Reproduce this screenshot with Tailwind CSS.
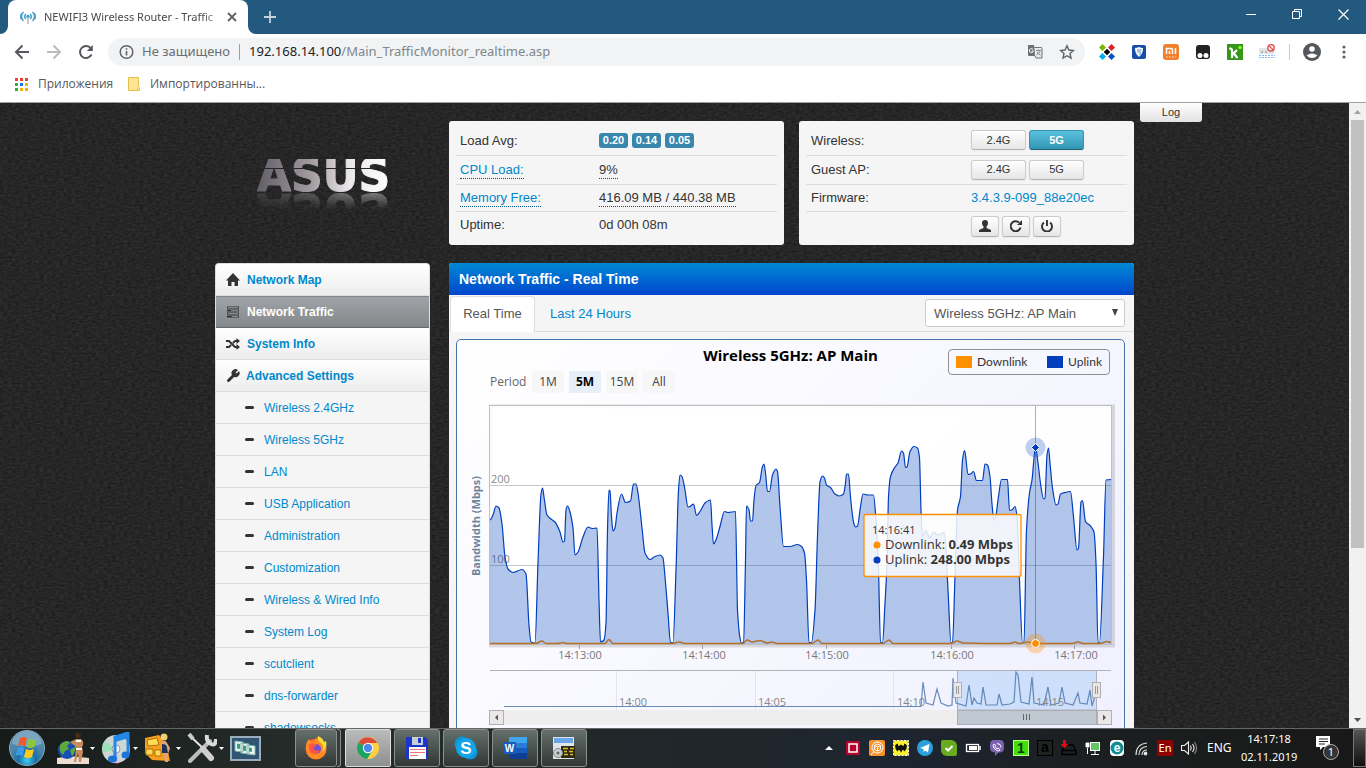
<!DOCTYPE html>
<html lang="ru">
<head>
  <meta charset="UTF-8" />
  <meta name="viewport" content="width=device-width, initial-scale=1" />
  <title>NEWIFI3 Wireless Router - Traffic Monitor</title>
  <script src="https://cdn.jsdelivr.net/npm/@tailwindcss/browser@4"></script>
</head>
<body class="h-screen overflow-hidden flex flex-col bg-[#262626] text-[#333] text-[13px] font-['Liberation_Sans',Arial,sans-serif]">

  <!-- tab strip -->
  <div class="h-[34px] shrink-0 bg-[#23587f] flex items-start pl-2 font-['Noto_Sans','Open_Sans',sans-serif]">
    <div class="relative w-60 h-[34px] bg-white rounded-t-lg flex items-center pl-3 pr-2 text-[#45494d]">
      <svg class="absolute -left-2 bottom-0 w-2 h-2" viewBox="0 0 8 8"><path d="M8 0v8H0a8 8 0 0 0 8-8z" fill="#fff"/></svg>
      <svg class="absolute -right-2 bottom-0 w-2 h-2" viewBox="0 0 8 8"><path d="M0 0v8h8a8 8 0 0 1-8-8z" fill="#fff"/></svg>
      <svg class="w-4 h-4 shrink-0" viewBox="0 0 16 16" fill="none" stroke="#3d9ccc" stroke-width="1.500">
        <path d="M3.500 3a6 6 0 0 0 0 9M12.500 3a6 6 0 0 1 0 9M5.800 5a3.500 3.500 0 0 0 0 5M10.200 5a3.500 3.500 0 0 1 0 5M1.500 4.500a7 7 0 0 0 0 6M14.500 4.500a7 7 0 0 1 0 6"/>
        <circle cx="8" cy="7.500" r="1" fill="#3d9ccc"/><path d="M8 8v7" stroke="#b5b5b5"/>
      </svg>
      <span class="ml-2 flex-1 text-[11px] whitespace-nowrap [mask-image:linear-gradient(90deg,#000_88%,#0003)]">NEWIFI3 Wireless Router - Traffic</span>
      <button class="w-4 h-4" aria-label="Close tab"><svg class="w-4 h-4" viewBox="0 0 16 16"><path d="M4 4l8 8M12 4l-8 8" stroke="#5f6368" stroke-width="1.800"/></svg></button>
    </div>
    <button class="ml-4 h-[34px] w-3" aria-label="New tab"><svg class="w-3 h-3" viewBox="0 0 12 12"><path d="M6 0v12M0 6h12" stroke="#c5d3de" stroke-width="1.800"/></svg></button>
    <div class="ml-auto flex items-center h-[28px] text-white">
      <button class="w-[46px] flex justify-center" aria-label="Minimize"><svg class="w-[11px] h-[11px]" viewBox="0 0 11 11"><path d="M0 5.500h10" stroke="#fff"/></svg></button>
      <button class="w-[46px] flex justify-center" aria-label="Restore"><svg class="w-[11px] h-[11px]" viewBox="0 0 11 11"><path d="M.5 2.500h7v7h-7zM2.500 2.500v-2h7v7h-2" fill="none" stroke="#fff"/></svg></button>
      <button class="w-[46px] flex justify-center" aria-label="Close"><svg class="w-[11px] h-[11px]" viewBox="0 0 11 11"><path d="M.5.5l10 10M10.500.5l-10 10" stroke="#fff" stroke-width="1.200"/></svg></button>
    </div>
  </div>

  <!-- toolbar -->
  <div class="h-9 shrink-0 bg-white flex items-center pl-[14px] pr-[14px] font-['Noto_Sans','Open_Sans',sans-serif]">
    <div class="flex gap-4">
      <button aria-label="Back"><svg class="block w-4 h-4" viewBox="0 0 16 16"><path d="M15 8H2M8.500 1.500L2 8l6.500 6.500" fill="none" stroke="#55595e" stroke-width="2"/></svg></button>
      <button aria-label="Forward"><svg class="block w-4 h-4" viewBox="0 0 16 16"><path d="M1 8h13M7.500 1.500L14 8l-6.500 6.500" fill="none" stroke="#b9bbbd" stroke-width="2"/></svg></button>
      <button aria-label="Reload"><svg class="block w-4 h-4" viewBox="0 0 16 16"><path d="M13.500 10.500a6 6 0 1 1-.6-6" fill="none" stroke="#55595e" stroke-width="2"/><path d="M14.800 1v6h-6z" fill="#55595e"/></svg></button>
    </div>
    <div class="ml-[14px] h-7 flex-1 rounded-full bg-[#f1f3f4] flex items-center pl-[11px] pr-[10px] text-[13px]">
      <svg class="w-4 h-4" viewBox="0 0 16 16"><circle cx="7.500" cy="8" r="6.300" fill="none" stroke="#5f6368" stroke-width="1.500"/><path d="M7.500 7v4.500M7.500 4.200v1.600" stroke="#5f6368" stroke-width="1.600"/></svg>
      <span class="ml-[7px] text-[#6b6f74]">Не защищено</span>
      <span class="mx-[9px] w-px h-4 bg-[#9aa0a6]"></span>
      <div class="flex-1 whitespace-nowrap text-[#80868b]"><span class="text-[#202124]">192.168.14.100</span>/Main_TrafficMonitor_realtime.asp</div>
      <svg class="w-4 h-4" viewBox="0 0 16 16"><path d="M1 1h6l2 11H2a1 1 0 0 1-1-1z" fill="#6e7276"/><path d="M7.500 3.500H14a1 1 0 0 1 1 1V14H9l-1-2" fill="#e8eaeb" stroke="#6e7276"/><path d="M6 5.500a2 2 0 1 0 .3 1.500H4.500" fill="none" stroke="#fff"/><path d="M9 6.500h5M11.500 5.500v1M13 7q-1 3-3.500 4M10 8q1 2 3.500 3" fill="none" stroke="#6e7276" stroke-width=".8"/></svg>
      <svg class="w-4 h-4 ml-4" viewBox="0 0 16 16"><path d="M8 1.800l1.900 4.200 4.500.5-3.400 3 1 4.500L8 11.700 4 14l1-4.500-3.400-3 4.500-.5z" fill="none" stroke="#5f6368" stroke-width="1.400"/></svg>
    </div>
    <div class="ml-[14px] flex items-center gap-4">
      <svg class="w-4 h-4" viewBox="0 0 16 16"><path d="M3.500 0L7 3.500 3.500 7 0 3.500z" fill="#78b800"/><path d="M12.500 0L16 3.500 12.500 7 9 3.500z" fill="#e01f26"/><path d="M3.500 9L7 12.500 3.500 16 0 12.500z" fill="#00aeea"/><path d="M12.500 9l3.500 3.500-3.500 3.500L9 12.500z" fill="#0a4fc0"/><path d="M8 4.700L11.300 8 8 11.300 4.700 8z" fill="#000"/></svg>
      <svg class="w-4 h-4" viewBox="0 0 16 16"><rect x="1" y="1" width="14" height="14" rx="2" fill="#174ea6"/><path d="M8 3q2 1 4 1 0 6-4 9-4-3-4-9 2 0 4-1z" fill="#fff"/><path d="M6 6h4.500M6 8h4M8 10.500l2-1" stroke="#4d8fd0" fill="none"/></svg>
      <svg class="w-4 h-4" viewBox="0 0 16 16"><rect width="16" height="16" rx="3" fill="#f08030"/><path d="M3.500 10V4.500H8a1.500 1.500 0 0 1 1.500 1.500v4M6.500 7v3M12.500 4v6" fill="none" stroke="#fff" stroke-width="1.500"/><path d="M3 13h10" stroke="#ffd0a0" stroke-dasharray="2 1"/></svg>
      <svg class="w-4 h-4" viewBox="0 0 16 16"><path d="M4 1h8a3 3 0 0 1 3 3v8a3 3 0 0 1-3 3H4a3 3 0 0 1-3-3V4a3 3 0 0 1 3-3z" fill="#222"/><circle cx="5" cy="11.500" r="2.500" fill="#fff"/><circle cx="11" cy="11.500" r="2.500" fill="#fff"/></svg>
      <svg class="w-4 h-4" viewBox="0 0 16 16"><rect width="16" height="16" fill="#35961c"/><path d="M2.500 4l2.500 1.500V14M5 11l5-5M6.500 9l4 5" fill="none" stroke="#fff" stroke-width="2.200"/><circle cx="13" cy="3.500" r="1.800" fill="#7dff1e"/></svg>
      <svg class="w-4 h-4" viewBox="0 0 16 16"><rect y="4" width="15" height="6" fill="#e1e4e6"/><path d="M2 8h2M6 8h2" stroke="#888"/><path d="M0 11.500h16M0 13.500h16" stroke="#86b7f0" stroke-dasharray="2 1"/><circle cx="12" cy="3.800" r="3.200" fill="#fff" stroke="#e44b4b" stroke-width="1.400"/><path d="M10 1.800l4 4" stroke="#e44b4b" stroke-width="1.300"/></svg>
      <span class="w-px h-4 bg-[#c8cbce] -ml-[2px]"></span>
      <svg class="w-[18px] h-[18px] -ml-[3px]" viewBox="0 0 18 18"><circle cx="9" cy="9" r="9" fill="#54585d"/><circle cx="9" cy="6" r="2.800" fill="#fff"/><path d="M3.500 12.500q5.500-4 11 0-5.500 5-11 0z" fill="#fff"/></svg>
      <svg class="w-4 h-4 -ml-px" viewBox="0 0 16 16" fill="#5f6368"><circle cx="8" cy="3" r="1.600"/><circle cx="8" cy="8" r="1.600"/><circle cx="8" cy="13" r="1.600"/></svg>
    </div>
  </div>

  <!-- bookmarks -->
  <div class="h-[33px] shrink-0 bg-white border-b border-[#a0a0a0] flex items-center pl-[15px] pb-1 text-[12px] text-[#55585c] font-['Open_Sans','Noto_Sans',sans-serif]">
    <svg class="w-[13px] h-[13px]" viewBox="0 0 13 13"><path d="M0 0h3v3H0zM5 0h3v3H5zM10 0h3v3h-3z" fill="#ea4335"/><path d="M0 5h3v3H0zM0 10h3v3H0z" fill="#34a853"/><path d="M5 5h3v3H5z" fill="#1a73e8"/><path d="M10 5h3v3h-3zM5 10h3v3H5zM10 10h3v3h-3z" fill="#f5b400"/></svg>
    <a href="#" class="ml-[10px] w-20">Приложения</a>
    <svg class="ml-[10px] w-3 h-[14px]" viewBox="0 0 12 14"><path d="M.5.5h10v9l1 1v3h-11z" fill="#ffe695" stroke="#e5c04d"/><path d="M9.500 13v-2.500" stroke="#e5c04d"/></svg>
    <a href="#" class="ml-[10px]">Импортированны...</a>
  </div>

  <!-- page -->
  <div class="flex-1 min-h-0 flex">
    <div class="relative flex-1 overflow-hidden bg-[#262626]">
      <svg class="absolute inset-0 w-full h-full">
        <filter id="leather" x="0" y="0" width="100%" height="100%" color-interpolation-filters="sRGB">
          <feTurbulence type="fractalNoise" baseFrequency="0.25 0.5" numOctaves="3" seed="4"/>
          <feColorMatrix type="matrix" values="0.12 0 0 0 0.09  0.12 0 0 0 0.09  0.12 0 0 0 0.09  0 0 0 0 1"/>
        </filter>
        <rect width="100%" height="100%" filter="url(#leather)"/>
      </svg>

      <div class="relative w-[919px] mx-auto pt-[18px]">
        <button class="absolute top-0 left-full ml-[6px] w-[62px] h-[19px] rounded-b-[3px] bg-linear-to-b from-white to-[#e2e2e2] text-[11px]">Log</button>

        <header class="flex">
          <div class="w-[234px] pl-10 pt-[38px]">
            <div class="w-[144px] h-[33px] [-webkit-box-reflect:below_1px_linear-gradient(transparent_50%,rgba(0,0,0,0.4))]">
              <svg class="block w-[144px] h-[33px] overflow-visible" viewBox="0 0 144 33">
                <linearGradient id="steel"><stop stop-color="#625e66"/><stop offset=".4" stop-color="#a19ba0"/><stop offset=".7" stop-color="#ece7ea"/><stop offset="1" stop-color="#fff"/></linearGradient>
                <mask id="cut"><path d="M0 0h144v9H0zM0 10h144v24H0z" fill="#fff"/></mask>
                <g mask="url(#cut)"><text x="2" y="32" font-family="DejaVu Sans" font-weight="700" font-size="44" fill="url(#steel)" stroke="url(#steel)">ASUS</text></g>
              </svg>
            </div>
          </div>
          <div class="flex gap-[15px]">
            <section class="w-[335px] h-[124px] rounded-[3px] bg-[#f5f5f5] px-[7px] pt-[5px]">
              <table class="w-full">
                <tr class="h-[29px] border-b border-[#ddd]"><th class="w-[143px] pl-1 text-left font-normal">Load Avg:</th>
                  <td><div class="flex gap-1 text-[11px] leading-[15px] font-bold text-white"><span class="w-[29px] text-center rounded-[3px] bg-[#3a87ad]">0.20</span><span class="w-[29px] text-center rounded-[3px] bg-[#3a87ad]">0.14</span><span class="w-[29px] text-center rounded-[3px] bg-[#3a87ad]">0.05</span></div></td></tr>
                <tr class="h-[29px] border-b border-[#ddd]"><th class="pl-1 text-left font-normal"><a href="#" class="text-[#08c] border-b border-dotted border-[#005580] leading-4 inline-block">CPU Load:</a></th><td><span class="border-b border-dotted border-[#005580] leading-4 inline-block">9%</span></td></tr>
                <tr class="h-[27px] border-b border-[#ddd]"><th class="pl-1 text-left font-normal"><a href="#" class="text-[#08c] border-b border-dotted border-[#005580] leading-4 inline-block">Memory Free:</a></th><td><span class="border-b border-dotted border-[#005580] leading-4 inline-block">416.09 MB / 440.38 MB</span></td></tr>
                <tr class="h-[27px]"><th class="pl-1 text-left font-normal">Uptime:</th><td>0d 00h 08m</td></tr>
              </table>
            </section>
            <section class="w-[335px] h-[124px] rounded-[3px] bg-[#f5f5f5] px-[7px] pt-[5px]">
              <table class="w-full">
                <tr class="h-[29px] border-b border-[#ddd]"><th class="w-[165px] pl-[5px] text-left font-normal">Wireless:</th>
                  <td><div class="flex gap-[3px] text-[11px]">
                    <button class="w-[55px] h-5 rounded-[3px] border border-[#ccc] border-b-[#b3b3b3] bg-linear-to-b from-white to-[#e6e6e6] shadow-xs">2.4G</button>
                    <button class="w-[55px] h-5 rounded-[3px] border border-[#2f96b4] border-b-[#1f6377] bg-linear-to-b from-[#5bc0de] to-[#2f96b4] text-white font-bold shadow-xs">5G</button></div></td></tr>
                <tr class="h-[29px] border-b border-[#ddd]"><th class="pl-[5px] text-left font-normal">Guest AP:</th>
                  <td><div class="flex gap-[3px] text-[11px]">
                    <button class="w-[55px] h-5 rounded-[3px] border border-[#ccc] border-b-[#b3b3b3] bg-linear-to-b from-white to-[#e6e6e6] shadow-xs">2.4G</button>
                    <button class="w-[55px] h-5 rounded-[3px] border border-[#ccc] border-b-[#b3b3b3] bg-linear-to-b from-white to-[#e6e6e6] shadow-xs">5G</button></div></td></tr>
                <tr class="h-[27px] border-b border-[#ddd]"><th class="pl-[5px] text-left font-normal">Firmware:</th><td><a href="#" class="text-[#08c]">3.4.3.9-099_88e20ec</a></td></tr>
                <tr class="h-[30px]"><th></th><td><div class="flex gap-[3px]">
                  <button aria-label="Logout" class="w-7 h-[21px] rounded-[3px] border border-[#ccc] border-b-[#b3b3b3] bg-linear-to-b from-white to-[#e6e6e6] flex items-center justify-center shadow-xs"><svg class="w-3 h-3" viewBox="0 0 12 12"><path d="M6 0q3 0 3 3 0 2-1.500 3.500v1.500L12 10v2H0v-2l4.500-2V6.500Q3 5 3 3q0-3 3-3z" fill="#333"/></svg></button>
                  <button aria-label="Refresh" class="w-7 h-[21px] rounded-[3px] border border-[#ccc] border-b-[#b3b3b3] bg-linear-to-b from-white to-[#e6e6e6] flex items-center justify-center shadow-xs"><svg class="w-3 h-3" viewBox="0 0 12 12"><path d="M10.500 7.500A5 5 0 1 1 9 2.500" fill="none" stroke="#333" stroke-width="2"/><path d="M12 0v5H7z" fill="#333"/></svg></button>
                  <button aria-label="Reboot" class="w-7 h-[21px] rounded-[3px] border border-[#ccc] border-b-[#b3b3b3] bg-linear-to-b from-white to-[#e6e6e6] flex items-center justify-center shadow-xs"><svg class="w-3 h-3" viewBox="0 0 12 12"><path d="M3 2.500a5 5 0 1 0 6 0M6 0v6" fill="none" stroke="#333" stroke-width="1.900"/></svg></button>
                </div></td></tr>
              </table>
            </section>
          </div>
        </header>

        <div class="mt-[18px] flex gap-[19px] items-start">
          <!-- side menu -->
          <nav class="w-[215px] rounded-t-[4px] overflow-hidden border-x border-t border-[#ddd] bg-[#f5f5f5] text-[12px] text-[#08c]">
            <a href="#" class="h-8 pl-[10px] flex items-center font-bold border-b border-[#ddd] bg-linear-to-b from-white to-[#ededed]"><svg class="w-[14px] h-[14px] mr-[7px]" viewBox="0 0 14 14"><path d="M7 0l7 7.500h-2V13H8.500V9h-3v4H2V7.500H0z" fill="#333"/></svg>Network Map</a>
            <a href="#" class="h-8 pl-[10px] flex items-center font-bold text-white border-y border-t-[#85888b] border-b-[#66696c] bg-linear-to-b from-[#a0a3a7] to-[#85888b]"><svg class="w-[14px] h-[14px] mr-[7px]" viewBox="0 0 14 14"><path d="M1 2.500h12M1 5.500h12M1 8.500h12M1 11.500h12" stroke="#333" stroke-width="2"/><path d="M2 2.500h10M5 5.500h7M2 8.500h10M6 11.500h6" stroke="#aaa" stroke-width=".7"/></svg>Network Traffic</a>
            <a href="#" class="h-8 pl-[10px] flex items-center font-bold border-b border-[#ddd] bg-linear-to-b from-white to-[#ededed]"><svg class="w-[14px] h-[14px] mr-[7px]" viewBox="0 0 14 14"><path d="M0 4h3l6 6h2M0 10h3l2-2M7 6l2-2h2" fill="none" stroke="#333" stroke-width="2"/><path d="M10.500 1L14 4l-3.500 3zM10.500 7l3.500 3-3.500 3z" fill="#333"/></svg>System Info</a>
            <a href="#" class="h-8 pl-[10px] flex items-center font-bold border-b border-[#ddd] bg-linear-to-b from-white to-[#ededed]"><svg class="w-[14px] h-[14px] mr-[6px]" viewBox="0 0 14 14"><path d="M2.500 11.500L8 6" stroke="#333" stroke-width="3" stroke-linecap="round"/><path d="M12 1L9.500 3.500l1 1L13 2a4 4 0 1 1-6-1q2.500-2 5 0z" fill="#333"/></svg>Advanced Settings</a>
            <a href="#" class="h-8 pl-[29px] flex items-center gap-[10px] border-b border-[#ddd]"><i class="w-[9px] h-[3px] rounded-xs bg-[#333]"></i>Wireless 2.4GHz</a>
            <a href="#" class="h-8 pl-[29px] flex items-center gap-[10px] border-b border-[#ddd]"><i class="w-[9px] h-[3px] rounded-xs bg-[#333]"></i>Wireless 5GHz</a>
            <a href="#" class="h-8 pl-[29px] flex items-center gap-[10px] border-b border-[#ddd]"><i class="w-[9px] h-[3px] rounded-xs bg-[#333]"></i>LAN</a>
            <a href="#" class="h-8 pl-[29px] flex items-center gap-[10px] border-b border-[#ddd]"><i class="w-[9px] h-[3px] rounded-xs bg-[#333]"></i>USB Application</a>
            <a href="#" class="h-8 pl-[29px] flex items-center gap-[10px] border-b border-[#ddd]"><i class="w-[9px] h-[3px] rounded-xs bg-[#333]"></i>Administration</a>
            <a href="#" class="h-8 pl-[29px] flex items-center gap-[10px] border-b border-[#ddd]"><i class="w-[9px] h-[3px] rounded-xs bg-[#333]"></i>Customization</a>
            <a href="#" class="h-8 pl-[29px] flex items-center gap-[10px] border-b border-[#ddd]"><i class="w-[9px] h-[3px] rounded-xs bg-[#333]"></i>Wireless &amp; Wired Info</a>
            <a href="#" class="h-8 pl-[29px] flex items-center gap-[10px] border-b border-[#ddd]"><i class="w-[9px] h-[3px] rounded-xs bg-[#333]"></i>System Log</a>
            <a href="#" class="h-8 pl-[29px] flex items-center gap-[10px] border-b border-[#ddd]"><i class="w-[9px] h-[3px] rounded-xs bg-[#333]"></i>scutclient</a>
            <a href="#" class="h-8 pl-[29px] flex items-center gap-[10px] border-b border-[#ddd]"><i class="w-[9px] h-[3px] rounded-xs bg-[#333]"></i>dns-forwarder</a>
            <a href="#" class="h-8 pl-[29px] flex items-center gap-[10px] border-b border-[#ddd]"><i class="w-[9px] h-[3px] rounded-xs bg-[#333]"></i>shadowsocks</a>
          </nav>

          <!-- traffic panel -->
          <main class="flex-1 bg-[#f5f5f5] rounded-t-[3px] overflow-hidden">
            <h1 class="h-8 flex items-center pl-[10px] bg-linear-to-b from-[#0088d4] to-[#0044cc] text-white text-[14px] font-bold">Network Traffic - Real Time</h1>
            <div class="h-[37px] flex border-b border-[#ddd] pl-px pr-[9px]">
              <a href="#" class="mt-px pb-[2px] h-9 w-[85px] flex items-center justify-center bg-white border-x border-t border-[#ddd] rounded-t-[4px] text-[#555]">Real Time</a>
              <a href="#" class="ml-[15px] pt-px flex items-center text-[#08c]">Last 24 Hours</a>
              <div class="relative ml-auto mt-1">
                <select aria-label="Interface" class="appearance-none w-[200px] h-7 bg-white border border-[#ccc] rounded-[3px] pl-2 pt-px text-[13px] text-[#555]"><option>Wireless 5GHz: AP Main</option></select>
                <svg class="absolute right-[7px] top-[10px] w-[6px] h-[7px] pointer-events-none" viewBox="0 0 6 7"><path d="M0 0h6L3 7z" fill="#444"/></svg>
              </div>
            </div>

            <div class="mt-[7px] ml-[7px] mr-[9px] border border-[#4572a7] rounded-[5px] bg-[linear-gradient(135deg,#fff,#f0f0ff)] font-['Open_Sans','Noto_Sans',sans-serif]">
              <div class="h-[61px] grid grid-cols-[1fr_auto_1fr]">
                <div class="self-end mb-2 pl-[33px] flex items-center gap-[5px] text-[12px] text-[#666]">
                  <span class="w-[37px]">Period</span>
                  <button class="w-8 h-[22px] bg-[#f7f7f7] text-[#444]">1M</button>
                  <button class="w-8 h-[22px] bg-[#e7f0f9] text-black font-bold">5M</button>
                  <button class="w-8 h-[22px] bg-[#f7f7f7] text-[#444]">15M</button>
                  <button class="w-8 h-[22px] bg-[#f7f7f7] text-[#444]">All</button>
                </div>
                <h2 class="pt-[3px] text-[15px] leading-6 font-bold text-black">Wireless 5GHz: AP Main</h2>
                <div class="justify-self-end mt-[9px] mr-[14px] w-[162px] h-[26px] border border-[#909090] rounded-[4px] flex items-center pl-[7px] text-[12px] font-['Lato','Open_Sans',sans-serif]">
                  <i class="w-4 h-3 bg-[#ff9000]"></i><span class="ml-[5px] flex-1">Downlink</span>
                  <i class="w-4 h-3 bg-[#003ebb]"></i><span class="ml-[5px] mr-[7px]">Uplink</span>
                </div>
              </div>

              <svg class="block w-full" viewBox="457 401 667 340" font-family="Open Sans, Noto Sans, sans-serif">
                <rect x="491" y="406.500" width="622" height="239" fill="none" stroke="#000" stroke-opacity=".12" stroke-width="4"/>
                <rect x="489.500" y="405.500" width="622" height="239" fill="#fff" fill-opacity=".9" stroke="#c0c0c0"/>
                <path d="M490 485.500h621M490 565.500h621" stroke="#c8c8c8"/>
                <g font-size="11" fill="#8a8a8a"><text x="491" y="483">200</text><text x="491" y="563">100</text></g>
                <path id="uplink-area" fill="#003ebb" fill-opacity=".3"/>
                <path id="uplink-line" fill="none" stroke="#003ebb" stroke-width="1.200"/>
                <path id="downlink" fill="none" stroke="#b5702a" stroke-width="1.500"/>
                <path d="M1035.500 406v238" stroke="#000" stroke-opacity=".3"/>
                <path d="M579.500 645v4M702.500 645v4M826.500 645v4M951.500 645v4M1074.500 645v4" stroke="#a0a0a0"/>
                <g font-size="11" fill="#777" text-anchor="middle"><text x="580" y="659">14:13:00</text><text x="704" y="659">14:14:00</text><text x="827" y="659">14:15:00</text><text x="952" y="659">14:16:00</text><text x="1076" y="659">14:17:00</text></g>
                <text transform="translate(480 526) rotate(-90)" text-anchor="middle" font-size="11" font-weight="700" fill="#6d869f">Bandwidth (Mbps)</text>
                <circle cx="1035.500" cy="447.500" r="10" fill="#003ebb" fill-opacity=".25"/>
                <path d="M1035.500 443.500l4 4-4 4-4-4z" fill="#003ebb" stroke="#fff"/>
                <circle cx="1035.500" cy="643.500" r="10" fill="#ff9000" fill-opacity=".3"/>
                <circle cx="1035.500" cy="643.500" r="4" fill="#ff9000" stroke="#fff"/>

                <!-- navigator -->
                <path d="M616.500 671v39M755.500 671v39M893.500 671v39M1033.500 671v39" stroke="#e4e4ea"/>
                <path d="M490 670.500h621" stroke="#b2b1b6"/>
                <path d="M957.500 671V710H1096.500V671" fill="#8cbcf5" fill-opacity=".35" stroke="#b2b1b6"/>
                <path fill="none" stroke="#4572a7" stroke-opacity=".8" stroke-width="1.200" d="M504 706.500H921L923 682 926 703 933 705 937 689 941 703 948 706 952 705 953 678 956 703 966 706 969 685 972 705 974 698 977 703 981 704 983 687 986 705 997 705 999 694 1002 705 1010 704 1014 702 1016 672 1018 675 1021 702 1029 704 1032 677 1034 703 1044 705 1048 687 1051 705 1059 703 1062 687 1065 703 1073 705 1078 693 1080 703 1087 704 1090 690 1092 706 1096 693"/>
                <g font-size="11" fill="#888"><text x="619" y="706">14:00</text><text x="758" y="706">14:05</text><text x="897" y="706">14:10</text><text x="1036" y="706">14:15</text></g>
                <rect x="504" y="710" width="593" height="15" fill="#eee"/>
                <rect x="957.500" y="710.500" width="139" height="14" fill="#bfc8d1" stroke="#aaadb3"/>
                <path d="M1023.500 714v6M1026.500 714v6M1029.500 714v6" stroke="#666"/>
                <g fill="#ebe7e8" stroke="#b0b0b0"><rect x="489.500" y="710.500" width="14" height="14"/><rect x="1097.500" y="710.500" width="14" height="14"/><rect x="953.500" y="682.500" width="8" height="15"/><rect x="1092.500" y="682.500" width="8" height="15"/></g>
                <path d="M956.500 686v8M958.500 686v8M1095.500 686v8M1097.500 686v8" stroke="#999"/>
                <path d="M498 714.500v6l-3-3zM1103 714.500v6l3-3z" fill="#555"/>
                <text x="1111" y="735" text-anchor="end" font-size="9" fill="#909090">Highcharts.com</text>

                <!-- tooltip -->
                <rect x="864" y="514.500" width="157" height="62" rx="2" fill="#fcfcfc" fill-opacity=".85" stroke="#ff9000" stroke-width="1.300"/>
                <text x="872" y="534" font-size="11" fill="#333">14:16:41</text>
                <circle cx="877" cy="545" r="3.500" fill="#ff9000"/><circle cx="877" cy="560" r="3.500" fill="#003ebb"/>
                <g font-size="13" fill="#333"><text x="885" y="549">Downlink: <tspan font-weight="700">0.49 Mbps</tspan></text><text x="885" y="564">Uplink: <tspan font-weight="700">248.00 Mbps</tspan></text></g>
              </svg>
            </div>
          </main>
        </div>
      </div>
    </div>

    <!-- scroll bar -->
    <div class="w-[17px] bg-[#f1f1f1] flex flex-col items-center">
      <svg class="w-[17px] h-[17px]" viewBox="0 0 17 17"><path d="M5 11h7L8.500 7z" fill="#a3a3a3"/></svg>
      <div class="w-[13px] h-[428px] bg-[#c1c1c1]"></div>
      <svg class="w-[17px] h-[17px] mt-auto" viewBox="0 0 17 17"><path d="M5 7h7l-3.500 4z" fill="#505050"/></svg>
    </div>
  </div>

  <!-- task bar -->
  <footer class="h-10 shrink-0 flex items-center pb-px border-t border-[#666] bg-[linear-gradient(90deg,#151b18,#252c2a_22%,#20272a_50%,#1d2530_66%,#1c1f20_80%,#181818)] text-white text-[12px] font-['Noto_Sans','Open_Sans',sans-serif]">
    <button aria-label="Start" class="ml-[9px]"><svg class="block w-9 h-9" viewBox="0 0 36 36">
      <radialGradient id="orb" cx=".5" cy=".85"><stop stop-color="#3fd0f5"/><stop offset=".5" stop-color="#1c6fa5"/><stop offset="1" stop-color="#4d87ab"/></radialGradient>
      <circle cx="18" cy="18" r="17.500" fill="url(#orb)" stroke="#86a9bb"/>
      <path d="M3 14a15 13 0 0 1 30 0q-15 5-30 0z" fill="#fff" fill-opacity=".25"/>
      <path d="M11 8q4-2 7 0l-2 8q-4-2-7 0z" fill="#f0592a"/><path d="M19.500 9q4 2 8 0l-2 8q-4 2-8 0z" fill="#8cc63f"/><path d="M8.500 18q4-2 7 0l-2 8q-4-2-7 0z" fill="#3a9ae8"/><path d="M17 19q4 2 8 0l-2 8q-4 2-8 0z" fill="#ffcb20"/></svg></button>
    <div class="ml-3 flex items-center">
      <svg class="w-8 h-8" viewBox="0 0 32 32"><path d="M0 26l14-2 18 2v6H0z" fill="#ecdcd2"/><circle cx="10" cy="18" r="9" fill="#1750b5"/><path d="M3 13q3-4 8-4l2 2-3 3 2 3-4 2-2 4q-4-3-3-10zM13 18l5-3q1 5-3 9z" fill="#5fa83b"/><circle cx="21" cy="3.500" r="2.800" fill="#4a2a15"/><path d="M19 7h5q4 3 1 8l1 5-2 10h-2l-1-9-2 9h-2l2-12-1-4-5-4z" fill="#c98a5c"/><path d="M19 9h5M19 17h6" stroke="#fff" stroke-width="1.800"/></svg>
      <svg class="w-[5px] h-[3px] ml-px mr-[6px]" viewBox="0 0 5 3"><path d="M0 0h5L2.500 3z" fill="#fff"/></svg>
      <svg class="w-[30px] h-8" viewBox="0 0 30 32"><circle cx="15" cy="17" r="14" fill="#cdd6d5"/><path d="M15 17L4 9a14 14 0 0 0-2 12z" fill="#9ce0b8"/><path d="M15 17L8 29a14 14 0 0 0 10 2z" fill="#e2b8df"/><circle cx="15" cy="17" r="4" fill="#f4f4f4" stroke="#999"/><path d="M14 27V5l13-4v22" fill="none" stroke="#2387e8" stroke-width="3"/><path d="M14 8l13-4" stroke="#2387e8" stroke-width="4"/><ellipse cx="11.500" cy="27" rx="4.500" ry="3.500" fill="#1b74d8"/><ellipse cx="24.500" cy="23" rx="4" ry="3.500" fill="#1b74d8"/></svg>
      <svg class="w-[5px] h-[3px] ml-[2px] mr-[6px]" viewBox="0 0 5 3"><path d="M0 0h5L2.500 3z" fill="#fff"/></svg>
      <svg class="w-[28px] h-8" viewBox="0 0 28 32"><path d="M1 6L15 3l8 12 3 14-18-1-7-7z" fill="#f5a020"/><path d="M3 8l10-2 2 7-11 1zM2 17h7v6H2zM11 18h6v6h-6z" fill="#ffdc55" stroke="#b56a08"/><circle cx="20" cy="5" r="3.500" fill="#f0ce71"/><path d="M18 9q4-1 5 2l3 5-2 6v8h-3l-1-9-3-3z" fill="#dfa47e"/><path d="M18 12q5 0 5 4l1 5h-6z" fill="#1c3261"/></svg>
      <svg class="w-[5px] h-[3px] ml-1 mr-[6px]" viewBox="0 0 5 3"><path d="M0 0h5L2.500 3z" fill="#fff"/></svg>
      <svg class="w-[30px] h-8" viewBox="0 0 30 32"><path d="M3 29L23 9" stroke="#bcbcbc" stroke-width="4" stroke-linecap="round"/><path d="M2 3l18 17" stroke="#e4e4e4" stroke-width="2"/><path d="M2 2l4 5" stroke="#ccc" stroke-width="4"/><path d="M16 17l8 9" stroke="#cfcfcf" stroke-width="6" stroke-linecap="round"/><path d="M20 3q-1 7 4 9t5-5" fill="none" stroke="#dadada" stroke-width="4"/></svg>
      <svg class="w-[5px] h-[3px] ml-[2px] mr-[6px]" viewBox="0 0 5 3"><path d="M0 0h5L2.500 3z" fill="#fff"/></svg>
      <svg class="w-[31px] h-[25px]" viewBox="0 0 31 25"><rect x="1" y="1" width="29" height="23" fill="#305474" stroke="#9bacbb" stroke-width="2"/><path d="M5 5l8 1v10l-8-1zM11 7l8 1v10l-8-1zM17 9l8 1v9l-8-1z" fill="#eef6f5" stroke="#7fb7a8"/><path d="M7 7.500l3 .5v5l-3-.5zM13 9.500l3 .5v5l-3-.5zM19 11.500l3 .5v4l-3-.5z" fill="#3b9b83"/></svg>
    </div>
    <div class="ml-[34px] flex items-center gap-[3px]">
      <div class="flex mr-px"><button class="w-[42px] h-[38px] rounded-[3px] border border-[#8b908e] bg-linear-to-b from-[#65706c] to-[#303835] flex items-center justify-center"><svg class="w-6 h-6" viewBox="0 0 24 24"><circle cx="12" cy="13" r="10.500" fill="#ff6a2a"/><path d="M2 11Q2 6 5 3q1 3 4 3 3-1 4-5 4 3 5 6l2-1q4 6 1 12-4 5-9 5Q3 23 2 11z" fill="#ff8b25"/><path d="M14 0q-1 5 3 7 4 4 1 9 6-4 4-11l-2 1q-1-4-6-6z" fill="#ffdc3a"/><circle cx="12" cy="13" r="5" fill="#7250d8"/><path d="M5 8q5-2 8 1l-4 3q2 4 7 2-2 5-7 4-5-2-4-10z" fill="#ff5543"/></svg></button><i class="w-1 h-[38px] rounded-r-[3px] border border-l-0 border-[#8b908e] bg-[#333c38]"></i></div>
      <button class="w-[46px] h-[38px] rounded-[2px] border border-[#dbdddc] bg-linear-to-b from-[#b9bcba] to-[#8d908e] flex items-center justify-center"><svg class="w-[22px] h-[22px]" viewBox="0 0 22 22"><circle cx="11" cy="11" r="11" fill="#ffce43"/><path d="M11 11L1.500 5.500A11 11 0 0 0 10 22l5.500-8.500z" fill="#1ea362"/><path d="M11 11L1.500 5.500A11 11 0 0 1 20.500 6H11z" fill="#de4b3c"/><circle cx="11" cy="11" r="5.200" fill="#fff"/><circle cx="11" cy="11" r="4.200" fill="#4a87ef"/></svg></button>
      <button class="w-[46px] h-[38px] rounded-[3px] border border-[#8b908e] bg-linear-to-b from-[#65706c] to-[#303835] flex items-center justify-center"><svg class="w-6 h-6" viewBox="0 0 24 24"><path d="M1 1h19l3 3v19H1z" fill="#1d35c9"/><rect x="7" y="1" width="11" height="8" fill="#c6cfd6"/><rect x="13" y="2" width="3" height="5" fill="#1d35c9"/><rect x="4" y="11" width="17" height="12" fill="#fff"/><path d="M5 13.500h15M5 16.500h15M5 19.500h8" stroke="#e77"/></svg></button>
      <button class="w-[46px] h-[38px] rounded-[3px] border border-[#8b908e] bg-linear-to-b from-[#65706c] to-[#303835] flex items-center justify-center"><svg class="w-6 h-6" viewBox="0 0 24 24"><circle cx="8" cy="8" r="7.500" fill="#0d95d8"/><circle cx="16" cy="16" r="7.500" fill="#0d95d8"/><circle cx="12" cy="12" r="10" fill="#12a5e8"/><text x="12" y="18" text-anchor="middle" font-family="Liberation Sans" font-size="17" font-weight="700" fill="#fff">S</text></svg></button>
      <button class="w-[46px] h-[38px] rounded-[3px] border border-[#8b908e] bg-linear-to-b from-[#65706c] to-[#303835] flex items-center justify-center"><svg class="w-6 h-6" viewBox="0 0 24 24"><path d="M6 1h18v6H6z" fill="#41a5ee"/><path d="M6 7h18v5H6z" fill="#2b7cd3"/><path d="M6 12h18v5H6z" fill="#185abd"/><path d="M6 17h18v6H6z" fill="#103f91"/><rect y="6" width="13" height="12" fill="#185abd"/><text x="6.500" y="15.500" text-anchor="middle" font-family="Liberation Sans" font-size="10" font-weight="700" fill="#fff">W</text></svg></button>
      <button class="w-[46px] h-[38px] rounded-[3px] border border-[#8b908e] bg-linear-to-b from-[#65706c] to-[#303835] flex items-center justify-center"><svg class="w-6 h-6" viewBox="0 0 24 24"><rect x="1" y="1" width="21" height="22" fill="#e2e5e8"/><rect x="2" y="2" width="19" height="5" fill="#69a7e8"/><rect x="9" y="10" width="14" height="12" fill="#2c2a12"/><path d="M11 12.500h5M18 12.500h4M12 15.500h3M17 15.500h4M12 18.500h4M18 18.500h3" stroke="#d9bb2a" stroke-width="1.300"/><circle cx="6" cy="17" r="4.500" fill="#c9cdd1" stroke="#84898d"/><circle cx="6" cy="17" r="1.500" fill="#666"/></svg></button>
    </div>
    <div class="ml-auto flex items-center gap-2">
      <svg class="w-4 h-4" viewBox="0 0 16 16"><path d="M4 10h8L8 6z" fill="#fff"/></svg>
      <svg class="w-4 h-4" viewBox="0 0 16 16"><rect x="1" y="1" width="14" height="14" fill="#b4062c"/><rect x="4" y="4" width="8" height="8" fill="none" stroke="#fff" stroke-width="1.500"/></svg>
      <svg class="w-4 h-4" viewBox="0 0 16 16"><rect width="16" height="16" rx="2" fill="#f5922d"/><circle cx="8.500" cy="7.500" r="5.500" fill="none" stroke="#ffe2bd" stroke-width="1.300"/><path d="M8.500 4l3 1.500v4l-3 1.500-3-1.500v-4zM5.500 5.500l3 1.500 3-1.500M8.500 7v4M2 15l2.500-3" fill="none" stroke="#fff"/></svg>
      <svg class="w-4 h-4" viewBox="0 0 16 16"><rect x=".5" y=".5" width="15" height="15" fill="#f9f032" stroke="#fff" stroke-dasharray="2 1.500"/><path d="M2 5.500q1-1.500 3-2-.5 2.500 1.500 2.500l.5-1.500 1 .8 1-.8.5 1.500q2 0 1.500-2.500 2 .5 3 2 0 4-2.500 6-.5-2-2-1.500L8 12.500 6.500 10q-1.500-.5-2 1.500Q2 9.500 2 5.500z" fill="#111"/></svg>
      <svg class="w-4 h-4" viewBox="0 0 16 16"><circle cx="8" cy="8" r="8" fill="#2ba0dc"/><path d="M3 8l9.500-4-1.500 8.500-3-2-1.500 1.500V9z" fill="#fff"/></svg>
      <svg class="w-4 h-4" viewBox="0 0 16 16"><path d="M2 0h8a6 6 0 0 1 6 6v8a2 2 0 0 1-2 2H6a6 6 0 0 1-6-6V2a2 2 0 0 1 2-2z" fill="#69ab1f"/><path d="M4.500 8l2.500 2.500L11.500 6" fill="none" stroke="#fff" stroke-width="2"/></svg>
      <svg class="w-4 h-4" viewBox="0 0 16 16"><rect x="1.500" y="4.500" width="12" height="7" fill="none" stroke="#fff" stroke-width="1.300"/><rect x="4" y="6" width="8" height="4" fill="#fff"/><path d="M15 6v4" stroke="#fff" stroke-width="1.500"/></svg>
      <svg class="w-4 h-4" viewBox="0 0 16 16"><path d="M5 0h6q4 0 4 5v3q0 4-4 4.500H9.500L6 16v-3.500Q1 12 1 8V5q0-5 4-5z" fill="#7c63b2"/><path d="M5 4q-2 1 0 4t5 3l1-1.500L9 8 8 9 6 6.500l.8-1zM8 3.500q4 0 4 4" fill="none" stroke="#fff"/></svg>
      <svg class="w-4 h-4" viewBox="0 0 16 16"><rect x=".5" y=".5" width="15" height="15" fill="#43df0c" stroke="#b7ff93"/><text x="8" y="13" text-anchor="middle" font-family="Liberation Sans" font-size="14" font-weight="700" fill="#073b00">1</text></svg>
      <svg class="w-4 h-4" viewBox="0 0 16 16"><rect x=".5" y=".5" width="15" height="15" fill="#1f2221" stroke="#000"/><text x="8" y="12" text-anchor="middle" font-family="Liberation Sans" font-size="14" font-weight="700" fill="#000">a</text></svg>
      <svg class="w-4 h-4" viewBox="0 0 16 16"><path d="M6 5h6l3 6v3.500H1V10l2-2M1 10.500h14" fill="none" stroke="#000" stroke-width="1.300"/><path d="M2 0h3v4h2.500l-4 4-4-4H2z" fill="#e80808"/></svg>
      <svg class="w-4 h-4" viewBox="0 0 16 16"><rect x="5.500" y="2.500" width="9" height="8" fill="#65c465" stroke="#fff"/><path d="M10 11v3M6 14.500h8M2.500 8v6M1 3h3v4H1z" fill="#fff" stroke="#fff"/></svg>
      <svg class="w-4 h-4" viewBox="0 0 16 16"><rect x="1" width="14" height="16" rx="4" fill="#fff"/><circle cx="8" cy="8" r="6.500" fill="#108d91"/><text x="8" y="12" text-anchor="middle" font-family="Liberation Sans" font-size="12" font-weight="700" fill="#fff">e</text></svg>
      <svg class="w-4 h-4" viewBox="0 0 16 16" fill="none" stroke="#ddd" stroke-width="1.200"><path d="M3 15Q3 4 14 3M6 15q0-8 8-8.500M9 15q0-5 5-5"/><circle cx="12.500" cy="13.500" r="1.300" fill="#fff"/></svg>
      <span class="w-4 h-4 bg-[#8b0303] text-[11px] leading-4 text-center">En</span>
      <svg class="w-4 h-4" viewBox="0 0 16 16" fill="none" stroke="#eee" stroke-width="1.100"><path d="M.5 5.500h3l4-3.500v12l-4-3.500h-3z"/><path d="M9.500 5.500q1.500 2.500 0 5M11.500 4q3 4 0 8" /><path d="M13.500 2q4 6 0 12" stroke="#888"/></svg>
      <span class="ml-[2px] w-6">ENG</span>
    </div>
    <div class="ml-[10px] w-[56px] text-center text-[11px] leading-[18px]">14:17:18<br>02.11.2019</div>
    <svg class="ml-[18px] w-[26px] h-[26px]" viewBox="0 0 26 26"><path d="M1 1h14v11H8l-3 3v-3H1z" fill="#fff"/><path d="M4 4h9M4 6.500h9M4 9h6" stroke="#222"/><circle cx="16" cy="17" r="7.500" fill="#353535" stroke="#aaa"/><text x="16" y="21" text-anchor="middle" font-size="11" fill="#fff">1</text></svg>
    <div class="ml-3 w-[13px] h-[38px] border border-[#777] bg-linear-to-b from-[#555] to-[#111]"></div>
  </footer>

  <script>
    // screen points of the two series, x and y in turn
    const uplink = [490,520, 493,515, 496,506, 499,508, 502,524, 505,557, 508,569, 513,572.5, 522,569.5, 526,574, 529,625, 531,642, 535,643, 538,563, 541,494, 542.5,488, 544,497, 547,515, 551,519, 555,522, 560,532, 563,542, 564.5,541, 566,510, 567.5,506, 570,512, 573,528, 575,555, 578,552, 583,537, 588,527, 592,528.5, 597,528, 599,600, 600.500,642, 604,640, 606,623, 607.5,530, 609,490, 610,491, 611.5,517, 613,531, 615,528, 617,513, 621.5,494, 625.5,502.5, 630.5,501, 633.5,484, 636,484, 638,493, 642,528, 645,553, 650,559.5, 654,557, 660,555, 663,558, 665,577, 668,613, 670.5,642.5, 673,642.5, 676,570, 678.5,490, 680,475, 682,476.5, 685,490, 688,507, 690,506.5, 693.5,504, 696.5,515.5, 700,511.5, 705,503, 710.5,500, 712,525, 713.500,544, 716,540, 720,526.5, 724.5,511.5, 728,512.5, 735.500,511.5, 737.5,610, 740,638, 741.5,643, 743.5,642.5, 745.5,560, 746.5,506, 749,510, 750.5,521, 752.5,521, 754,500, 756,485.5, 759.5,482.5, 762.5,466.5, 764,464, 765.5,473, 767.5,491.5, 769.5,491.5, 772.5,475, 776,469, 777.5,471.5, 780,506.5, 783.5,546.5, 790,546.5, 797.5,544.5, 801.5,546.5, 804.5,553, 806.5,580, 809,642.5, 811.5,642.5, 815,610, 817.5,536, 820,482, 822.5,476, 824.5,478, 826.5,485, 830.5,487.5, 835,494, 839,496, 843.5,494, 845.5,483, 846.5,474, 848.5,474, 850.5,497, 853.5,522, 855.5,527, 857.5,526, 860.5,506.5, 863,494, 868,495, 873.5,495, 876,520, 878.5,570, 880.5,642.5, 882.5,642.5, 885,603, 887,563, 888.5,497, 890.5,476.5, 895,467, 898,463, 901.5,451, 903.5,453, 905.5,467.5, 907,467, 910,451.5, 914,446.5, 917.5,448, 919.5,458, 921,510, 922.5,536.5, 926,530.5, 929.5,538, 933.5,532.5, 938,535, 944.5,532.5, 948,590, 951,642.5, 952.5,642.5, 955,576, 957.5,510, 960.5,496.5, 962.5,460, 964.5,450.5, 965.5,455, 968,474.5, 970.5,474, 973.5,471.5, 976.5,480.5, 982.5,480.5, 985,464, 987.5,465, 990,476.5, 992,504, 994,520.5, 995.5,518, 998.5,496.5, 1001.5,479.5, 1007.5,479.5, 1009.5,510.5, 1012.5,509.5, 1015,506.5, 1017,516.5, 1019.5,580, 1022.5,642.5, 1024,642.5, 1026.5,530, 1029.5,493, 1032,480, 1035.5,447, 1038,463, 1041,487, 1043.5,499, 1045,498, 1047,455, 1048.5,448, 1050,463, 1052.5,488, 1056,505, 1058,504, 1060.5,494, 1065,492.5, 1070.5,491.5, 1073.5,517, 1077,550, 1078.5,548, 1081,502, 1082.5,500.5, 1085.5,521.5, 1090,525.5, 1094,532, 1096,563, 1098,642.5, 1099.5,642.5, 1103.5,556, 1106,480, 1111,479.5];
    const downlink = [490,643.5, 536,643.5, 542,641, 546,643.5, 558,643.5, 563,642.5, 567,643.5, 605,643.5, 609,639.5, 613,643.5, 673,643.5, 679,642, 685,643.5, 743,643.5, 747,640, 752,642, 760,640.5, 767,643, 772,642, 777,643.5, 812,643.5, 818,640, 822,643.5, 883,643.5, 889,640, 893,643.5, 951,643.5, 957,641, 963,643, 1010,643.5, 1015,642, 1019,643.5, 1028,642, 1036,643.5, 1072,643.5, 1078,642, 1083,643.5, 1100,643.5, 1107,641.5, 1111,642.5];

    // flat tangent at every peak, so the curve never overshoots
    function curve(p) {
      const n = p.length / 2;
      const slope = i => {
        if (i === 0 || i === n - 1) return 0;
        const a = (p[2*i+1] - p[2*i-1]) / (p[2*i] - p[2*i-2]);
        const b = (p[2*i+3] - p[2*i+1]) / (p[2*i+2] - p[2*i]);
        return a * b <= 0 ? 0 : 2 * a * b / (a + b);
      };
      let d = `M${p[0]} ${p[1]}`;
      for (let i = 1; i < n; i++) {
        const x0 = p[2*i-2], y0 = p[2*i-1], x1 = p[2*i], y1 = p[2*i+1], h = (x1 - x0) / 3;
        d += `C${x0+h} ${y0+h*slope(i-1)} ${x1-h} ${y1-h*slope(i)} ${x1} ${y1}`;
      }
      return d;
    }
    const line = curve(uplink);
    document.getElementById("uplink-line").setAttribute("d", line);
    document.getElementById("uplink-area").setAttribute("d", line + "V644H490Z");
    document.getElementById("downlink").setAttribute("d", curve(downlink));
  </script>
</body>
</html>
